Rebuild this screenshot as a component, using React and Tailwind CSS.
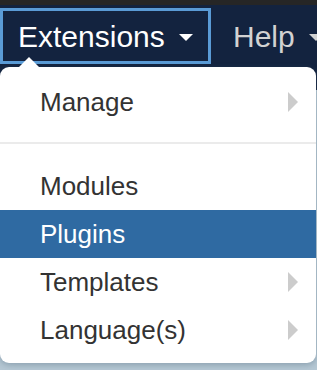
import React from 'react';

const items = [
    { label: 'Modules' },
    { label: 'Plugins', active: true },
    { label: 'Templates', sub: true },
    { label: 'Language(s)', sub: true },
];

const Chevron = () => (
    <span className="ml-auto mr-[18px] w-0 h-0 border-y-[10px] border-y-transparent border-l-[10px] border-l-[#cccccc]" />
);

const MenuItem = ({ label, active, sub }) => (
    <div
        className={`flex items-center h-[48px] pl-10 text-[26px] ${
            active ? 'bg-[#2f6aa2] text-white' : 'text-[#333333]'
        }`}
    >
        <span>{label}</span>
        {sub && <Chevron />}
    </div>
);

const App = () => {
    return (
        <div
            className="w-[317px] h-[370px] overflow-hidden bg-[linear-gradient(#13233f_0_90px,#b6c8d4_90px)]"
            style={{ fontFamily: '"Liberation Sans", Arial, sans-serif' }}
        >
            <div className="h-[5px] bg-[#262626]" />

            {/* Navbar */}
            <div className="h-[62px] bg-[#13233f] flex items-start pt-[3px] overflow-hidden">
                <div className="shrink-0 w-[211px] h-[56px] border-[3px] border-[#5a9bd6] flex items-center pl-[15px] text-white text-[30px]">
                    <span>Extensions</span>
                    <span className="ml-[14px] mt-[2px] w-0 h-0 border-x-[7px] border-x-transparent border-t-[7px] border-t-white" />
                </div>
                <div className="shrink-0 flex items-center h-[56px] pl-[22px] text-[#d2d2d2] text-[30px]">
                    <span>Help</span>
                    <span className="ml-[14px] mt-[2px] w-0 h-0 border-x-[7px] border-x-transparent border-t-[7px] border-t-[#d2d2d2]" />
                </div>
            </div>

            {/* Dropdown */}
            <div className="relative w-[316px] bg-white rounded-[9px] pt-[11px] pb-[9px] shadow-[0_2px_6px_rgba(60,90,110,0.35)]">
                <span className="absolute -top-[10px] left-[19px] w-0 h-0 border-x-[10px] border-x-transparent border-b-[10px] border-b-white" />
                <MenuItem label="Manage" sub />
                <div className="mt-[16px] mb-[18px] h-[2px] bg-[#ebebeb]" />
                {items.map((item) => (
                    <MenuItem key={item.label} {...item} />
                ))}
            </div>
        </div>
    );
};

export default App;
